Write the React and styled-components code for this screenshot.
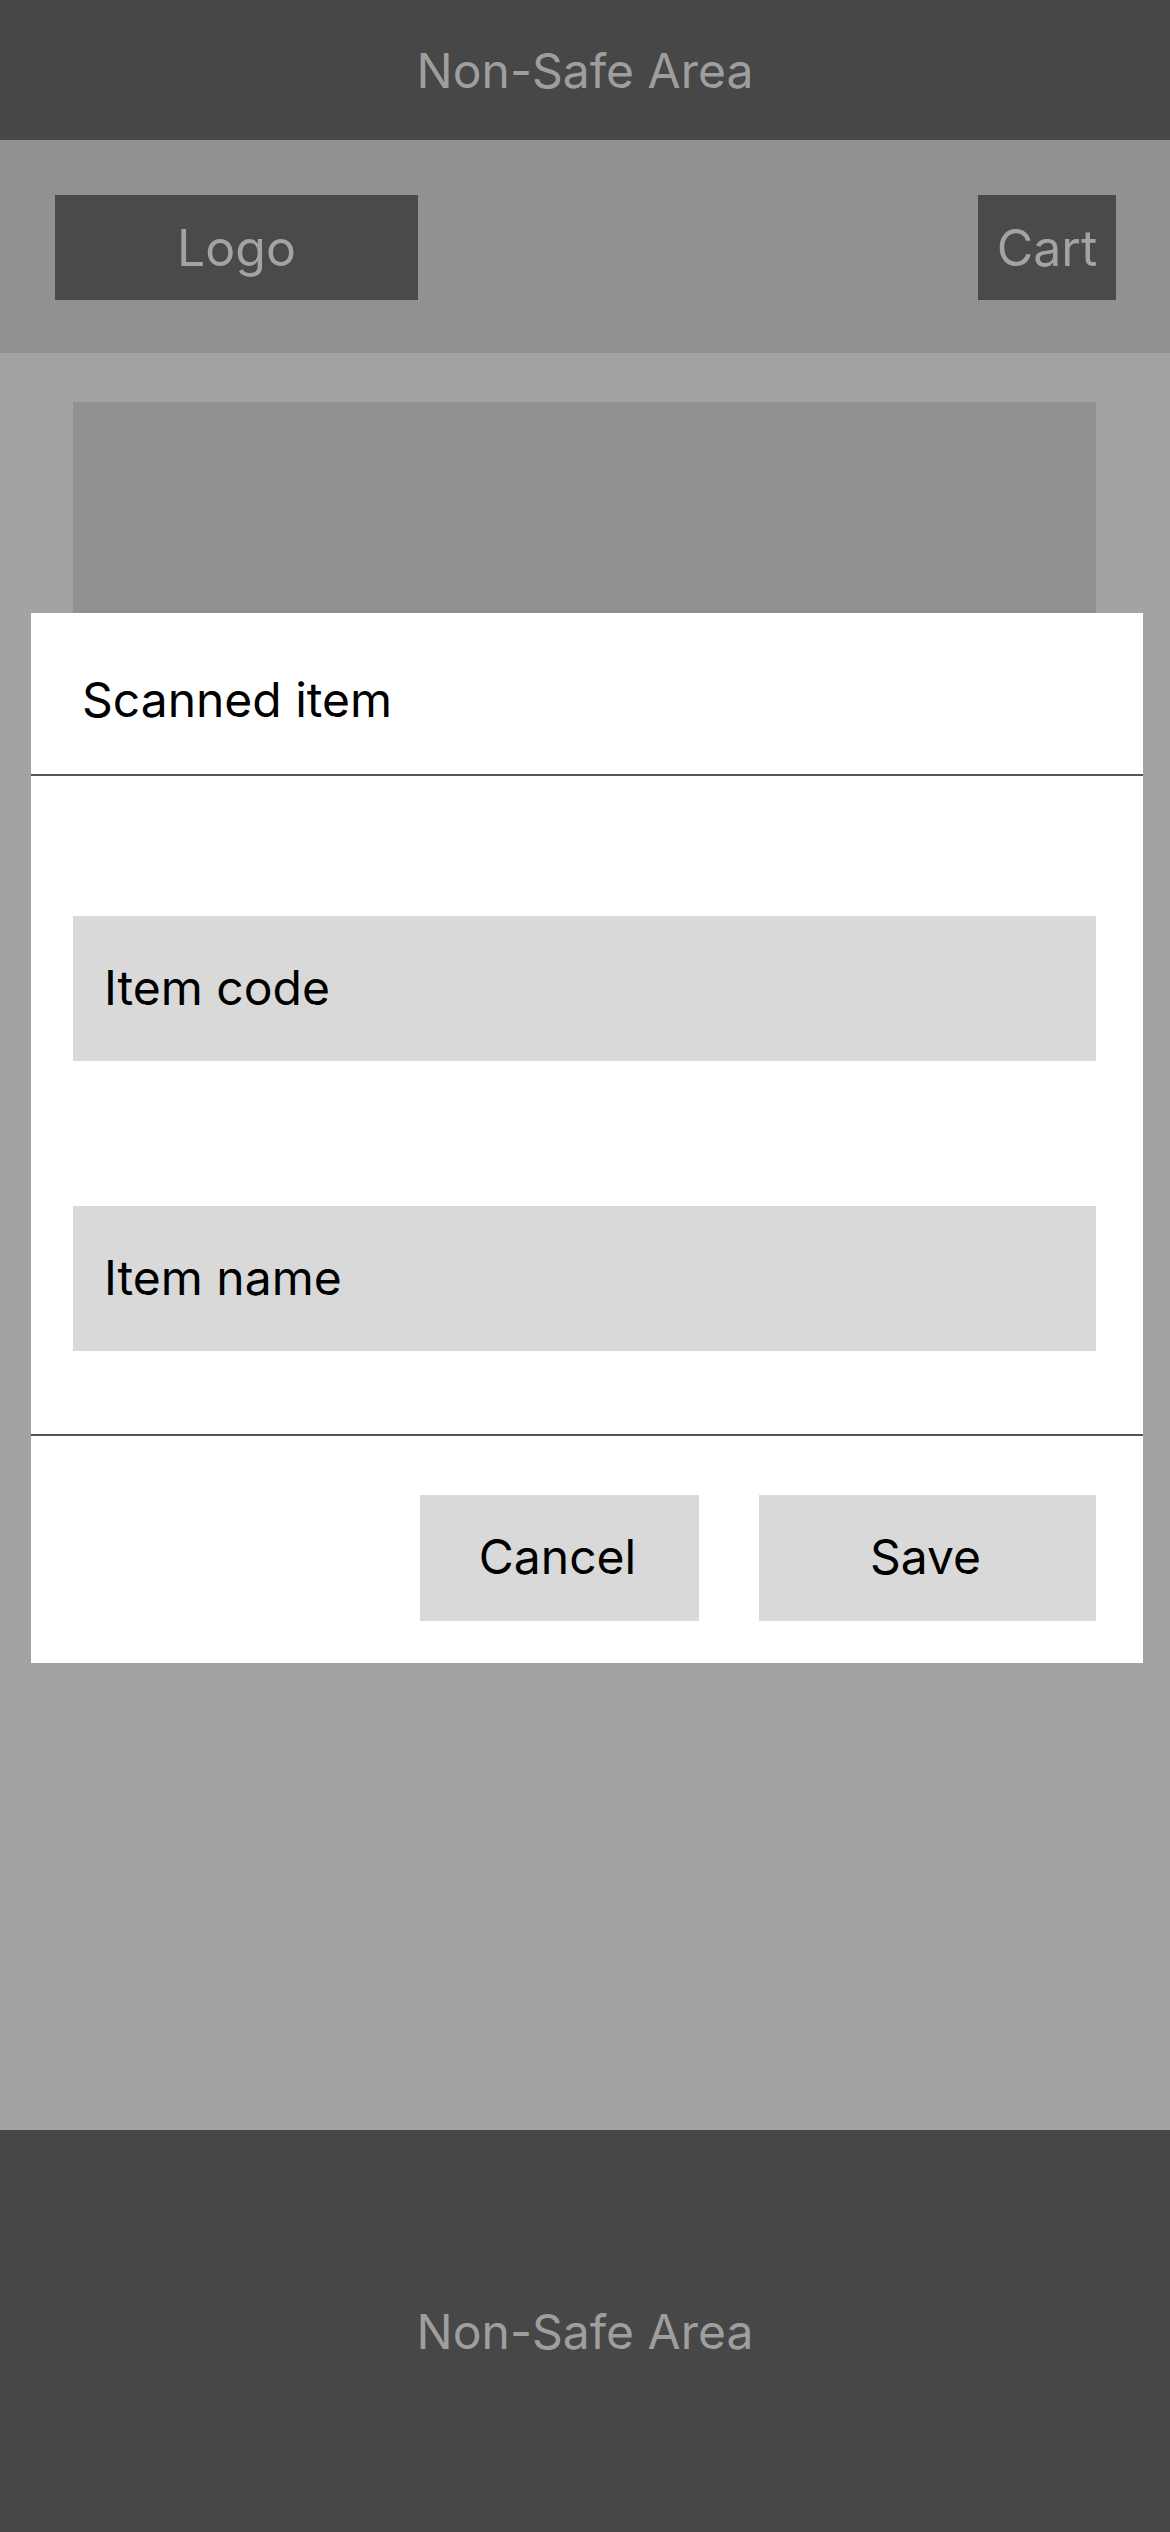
import styled, { createGlobalStyle } from "styled-components";

const GlobalStyle = createGlobalStyle`
  html, body {
    margin: 0;
    padding: 0;
    background: #474747;
  }
  * {
    box-sizing: border-box;
  }
  body {
    font-family: Inter, "Liberation Sans", sans-serif;
  }
`;

const Screen = styled.div`
  width: 1170px;
  height: 2532px;
  display: flex;
  flex-direction: column;
  overflow: hidden;
`;

const NonSafe = styled.div`
  height: ${(props) => props.h}px;
  flex-shrink: 0;
  background: #474747;
  color: #9e9e9e;
  font-size: 48px;
  display: flex;
  align-items: center;
  justify-content: center;
`;

const Header = styled.header`
  height: 213px;
  flex-shrink: 0;
  background: #919191;
  display: flex;
  align-items: center;
  justify-content: space-between;
  padding: 2px 54px 0 55px;
`;

const HeaderBox = styled.div`
  width: ${(props) => props.w}px;
  height: 105px;
  background: #4a4a4a;
  color: #a3a3a3;
  font-size: 50px;
  display: flex;
  align-items: center;
  justify-content: center;
`;

const Content = styled.main`
  flex: 1;
  position: relative;
  background: #a3a3a3;
  padding: 49px 74px 0 73px;
`;

const Banner = styled.div`
  height: 420px;
  background: #919191;
`;

const Modal = styled.div`
  position: absolute;
  top: 260px;
  left: 31px;
  width: 1112px;
  height: 1050px;
  background: #ffffff;
  display: flex;
  flex-direction: column;
`;

const ModalHeader = styled.div`
  height: 163px;
  display: flex;
  align-items: center;
  padding: 12px 51px 0;
  border-bottom: 2px solid #555555;
  font-size: 48px;
  color: #000000;
`;

const ModalBody = styled.div`
  display: flex;
  flex-direction: column;
  gap: 145px;
  padding: 140px 47px 83px 42px;
  border-bottom: 2px solid #555555;
`;

const Field = styled.div`
  height: 145px;
  background: #d9d9d9;
  display: flex;
  align-items: center;
  padding: 0 31px 2px;
  font-size: 48px;
  color: #000000;
`;

const ModalFooter = styled.div`
  display: flex;
  justify-content: flex-end;
  gap: 60px;
  padding: 59px 47px 0 0;
`;

const Button = styled.button`
  width: ${(props) => props.w}px;
  height: 126px;
  border: none;
  background: #d9d9d9;
  font-family: inherit;
  font-size: 48px;
  color: #000000;
  padding: 0 4px 4px 0;
`;

const App = () => {
  return (
    <Screen>
      <GlobalStyle />
      <NonSafe h={140}>Non-Safe Area</NonSafe>
      <Header>
        <HeaderBox w={363}>Logo</HeaderBox>
        <HeaderBox w={138}>Cart</HeaderBox>
      </Header>
      <Content>
        <Banner />
        <Modal>
          <ModalHeader>Scanned item</ModalHeader>
          <ModalBody>
            <Field>Item code</Field>
            <Field>Item name</Field>
          </ModalBody>
          <ModalFooter>
            <Button w={279}>Cancel</Button>
            <Button w={337}>Save</Button>
          </ModalFooter>
        </Modal>
      </Content>
      <NonSafe h={402}>Non-Safe Area</NonSafe>
    </Screen>
  );
};

export default App;
